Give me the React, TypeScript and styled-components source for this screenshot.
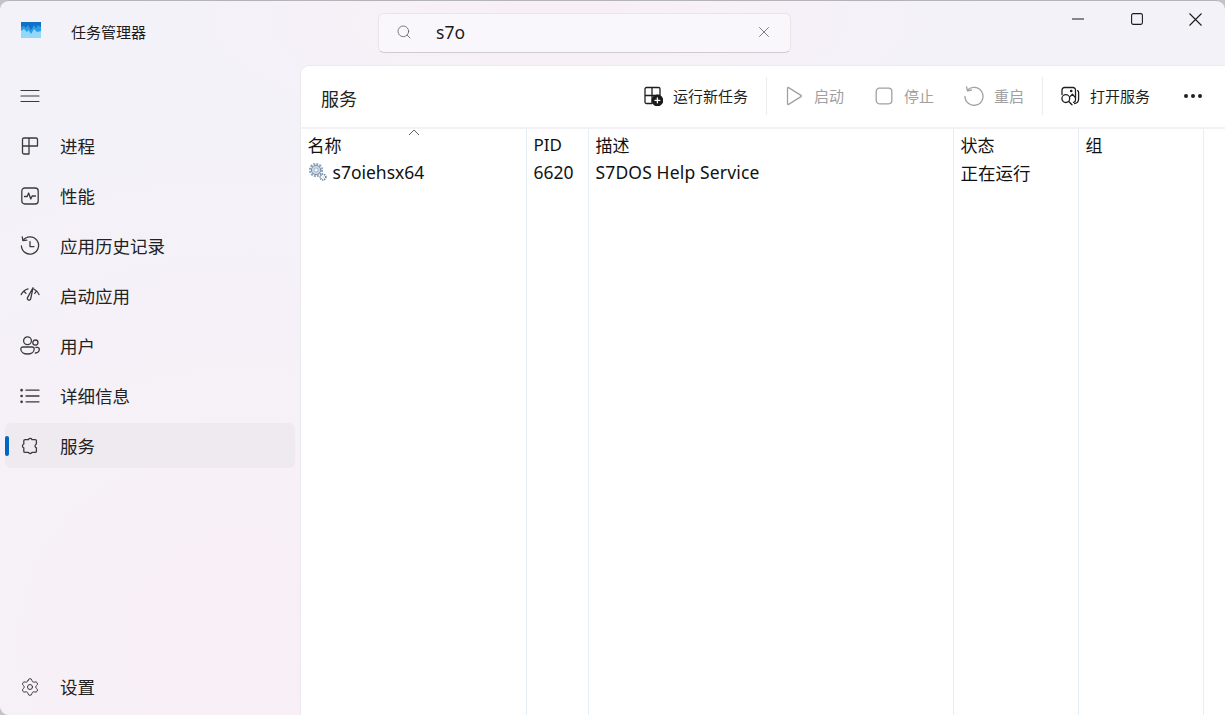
import { FC, ReactNode } from "react";
import styled, { createGlobalStyle } from "styled-components";
import { Ellipsis, Search, Settings, X } from "lucide-react";

const FONT = `"Noto Sans", "Noto Sans CJK SC", sans-serif`;

const Global = createGlobalStyle`
	html, body {
		margin:0;
		padding:0;
		background:#c4c4c8;
	}
	body {
		font-family:${ FONT };
		color:#1b1b1b;
		overflow:hidden;
	}
`;

const Glyph:FC<{ size?:number; sw?:number; children:ReactNode }> = ({ size = 20, sw = 1.3, children }) => (
	<svg
	width={ size }
	height={ size }
	viewBox="0 0 20 20"
	fill="none"
	stroke="currentColor"
	strokeWidth={ sw }
	strokeLinecap="round"
	strokeLinejoin="round"
	>
		{ children }
	</svg>
);

const AppLogo = () => (
	<svg width="20" height="16" viewBox="0 0 20 16">
		<rect width="20" height="16" fill="#1270c4" />
		<path d="M0 5 L3 4 L5 6 L7 3 L10 8 L13 3 L15 6 L17 3 L20 5 V16 H0 Z" fill="#2c9ce6" />
		<path d="M0 9 L3 7 L6 10 L7.5 8 L10 12 L13 7 L16 10 L20 9 V16 H0 Z" fill="#93d7fb" />
	</svg>
);

const icons = {
	menu:<Glyph sw={ 1.2 }><path d="M1 4.5h18M1 10h18M1 15.5h18" /></Glyph>,
	process:(
		<Glyph>
			<path d="M9 10H2.5V3.5a1.5 1.5 0 0 1 1.5-1.5h5zM9 2h7a1.5 1.5 0 0 1 1.5 1.5V10H9zM2.5 10H9v8H4a1.5 1.5 0 0 1-1.5-1.5z" />
		</Glyph>
	),
	perf:(
		<Glyph>
			<rect x="1.8" y="2" width="16.4" height="16" rx="3" />
			<path d="M4.5 10.5h2.7l1.4-3.5 2.2 6 1.4-3h3.3" />
		</Glyph>
	),
	history:(
		<Glyph>
			<path d="M3.2 4.2A8.6 8.6 0 1 1 1.4 10" />
			<path d="M2.2 0.8 3 4.6 6.8 4.2" />
			<path d="M10 5.6v5h4" />
		</Glyph>
	),
	startup:(
		<Glyph>
			<path d="M1.2 8.6A10.5 10.5 0 0 1 8 2.8M3.8 5.2 6 7.4" />
			<path d="M13.8 3A10.5 10.5 0 0 1 19 8.6M16.4 5.2 14.8 7.4" />
			<path d="M13 1.8 10.7 12.8a1.7 1.7 0 0 1-3.3-.9z" />
		</Glyph>
	),
	users:(
		<Glyph>
			<circle cx="7.5" cy="4.8" r="3.9" />
			<circle cx="15.4" cy="6.6" r="2.6" />
			<path d="M2.8 11h9.4a2 2 0 0 1 2 2c0 3-3 5-6.7 5s-6.7-2-6.7-5a2 2 0 0 1 2-2z" />
			<path d="M15.8 11.4h1.6a1.9 1.9 0 0 1 1.9 1.9c0 2-1.6 3.5-4 3.7" />
		</Glyph>
	),
	details:(
		<Glyph>
			<path d="M6 4.2h13M6 10h13M6 15.8h13" />
			<circle cx="1.6" cy="4.2" r=".7" fill="currentColor" />
			<circle cx="1.6" cy="10" r=".7" fill="currentColor" />
			<circle cx="1.6" cy="15.8" r=".7" fill="currentColor" />
		</Glyph>
	),
	services:(
		<Glyph>
			<path d="M5 3.6h3.4a2 2 0 0 1 3.6 0H15.2a1.2 1.2 0 0 1 1.2 1.2V8a2 2 0 0 0 0 3.8v3.4a1.2 1.2 0 0 1-1.2 1.2H12a2 2 0 0 1-3.6 0H5a1.2 1.2 0 0 1-1.2-1.2v-3.4a2 2 0 0 1 0-3.8V4.8A1.2 1.2 0 0 1 5 3.6z" />
		</Glyph>
	),
	run:(
		<Glyph>
			<path d="M9 9.5H2V3a1.5 1.5 0 0 1 1.5-1.5H9zM9 1.5h6.5A1.5 1.5 0 0 1 17 3v6.5H9zM2 9.5h7v8H3.5A1.5 1.5 0 0 1 2 16z" />
			<circle cx="14.4" cy="14.4" r="5.2" fill="#1b1b1b" stroke="#1b1b1b" />
			<path d="M14.4 12v4.8M12 14.4h4.8" stroke="#fff" />
		</Glyph>
	),
	play:<Glyph><path d="M3.5 2.2v15.6a.7.7 0 0 0 1.1.6L17 10.6a.7.7 0 0 0 0-1.2L4.6 1.6a.7.7 0 0 0-1.1.6z" /></Glyph>,
	stop:<Glyph><rect x="2.2" y="2.2" width="15.6" height="15.6" rx="3.2" /></Glyph>,
	restart:(
		<Glyph>
			<path d="M3.6 4A9 9 0 1 1 1 10.5" />
			<path d="M2.6 0.8 3.4 4.8 7.4 4" />
		</Glyph>
	),
	open:(
		<Glyph>
			<path d="M2 8.6V4a2.5 2.5 0 0 1 2.5-2.5H13A2.5 2.5 0 0 1 15.5 4v10a2.5 2.5 0 0 1-2 2.4" />
			<path d="M10 10.6 12.4 8.2l3.1 3.4" />
			<circle cx="11.2" cy="5" r=".7" fill="currentColor" />
			<path d="M17.6 4.6a2.6 2.6 0 0 1 1 2V13a4.6 4.6 0 0 1-4 4.5" />
			<circle cx="5.8" cy="12.6" r="3.9" />
			<path d="M8.7 15.5 12 18.7" />
		</Glyph>
	),
};

const ServiceGear = () => (
	<svg width="20" height="20" viewBox="0 0 20 20">
		<circle cx="8" cy="8" r="5.8" fill="none" stroke="#8fa6bd" strokeWidth="2.6" strokeDasharray="1.9 1.1" />
		<circle cx="8" cy="8" r="4.6" fill="#c9d8e6" stroke="#7f93a8" strokeWidth="1" />
		<circle cx="8" cy="8" r="2" fill="#f2f6fa" stroke="#8fa6bd" strokeWidth=".7" />
		<circle cx="15" cy="15" r="2.8" fill="none" stroke="#6f8296" strokeWidth="1.7" strokeDasharray="1.2 .8" />
		<circle cx="15" cy="15" r="1.1" fill="#dfe7ef" />
	</svg>
);

const Description = styled.span`
	letter-spacing:0.15px;
`;

const NAV = [
	{ icon:icons.process, label:"进程" },
	{ icon:icons.perf, label:"性能" },
	{ icon:icons.history, label:"应用历史记录" },
	{ icon:icons.startup, label:"启动应用" },
	{ icon:icons.users, label:"用户" },
	{ icon:icons.details, label:"详细信息" },
	{ icon:icons.services, label:"服务", active:true },
];

const COLUMNS = [
	{ title:"名称", cell:<><ServiceGear /><span>s7oiehsx64</span></> },
	{ title:"PID", cell:"6620" },
	{ title:"描述", cell:<Description>S7DOS Help Service</Description> },
	{ title:"状态", cell:"正在运行" },
	{ title:"组", cell:"" },
	{ title:"", cell:"", last:true },
];

export default function App(){

	const dnav = NAV.map(n => {
		return (
			<NavRow key={ n.label } $active={ n.active }>
				{ n.active ? <NavMarker /> : null }
				<NavIcon>{ n.icon }</NavIcon>
				<span>{ n.label }</span>
			</NavRow>
		);
	});

	const dcolumns = COLUMNS.map((c, i) => {
		return (
			<Column key={ "c" + i } $last={ c.last }>
				<HeadCell>{ c.title }</HeadCell>
				<RowCell>{ c.cell }</RowCell>
				{ i === 0 ? <SortMark><svg width="12" height="7" viewBox="0 0 12 7" fill="none" stroke="#666" strokeWidth="1"><path d="M1 6 6 1l5 5" /></svg></SortMark> : null }
			</Column>
		);
	});

	return (
		<Window>
			<Global />
			<TitleBar>
				<Brand>
					<LogoSlot><AppLogo /></LogoSlot>
					<AppName>任务管理器</AppName>
				</Brand>
				<SearchBox>
					<Search size={ 16 } strokeWidth={ 1.2 } color="#5c5c5c" />
					<SearchText>s7o</SearchText>
					<X size={ 18 } strokeWidth={ 1 } color="#555" />
				</SearchBox>
				<Controls>
					<ControlBtn>
						<svg width="12" height="12" viewBox="0 0 12 12" stroke="#1b1b1b" strokeWidth="1.1"><path d="M0 6h12" /></svg>
					</ControlBtn>
					<ControlBtn>
						<svg width="12" height="12" viewBox="0 0 12 12" fill="none" stroke="#1b1b1b" strokeWidth="1.1"><rect x=".6" y=".6" width="10.8" height="10.8" rx="1.6" /></svg>
					</ControlBtn>
					<ControlBtn>
						<svg width="13" height="13" viewBox="0 0 13 13" stroke="#1b1b1b" strokeWidth="1.1"><path d="M.5.5l12 12M12.5.5l-12 12" /></svg>
					</ControlBtn>
				</Controls>
			</TitleBar>
			<Body>
				<Sidebar>
					<NavRow>
						<NavIcon>{ icons.menu }</NavIcon>
					</NavRow>
					{ dnav }
					<SidebarFoot>
						<NavRow>
							<NavIcon><Settings size={ 20 } strokeWidth={ 1.2 } /></NavIcon>
							<span>设置</span>
						</NavRow>
					</SidebarFoot>
				</Sidebar>
				<Panel>
					<Toolbar>
						<PanelTitle>服务</PanelTitle>
						<ToolBtn>{ icons.run }<span>运行新任务</span></ToolBtn>
						<ToolSep />
						<ToolBtn $off>{ icons.play }<span>启动</span></ToolBtn>
						<ToolBtn $off>{ icons.stop }<span>停止</span></ToolBtn>
						<ToolBtn $off>{ icons.restart }<span>重启</span></ToolBtn>
						<ToolSep />
						<ToolBtn>{ icons.open }<span>打开服务</span></ToolBtn>
						<MoreBtn><Ellipsis size={ 24 } strokeWidth={ 2 } /></MoreBtn>
					</Toolbar>
					<Table>
						{ dcolumns }
					</Table>
				</Panel>
			</Body>
		</Window>
	);
}

const Window = styled.div`
	width:1225px;
	height:715px;
	box-sizing:border-box;
	display:flex;
	flex-direction:column;
	border-top:1px solid #b4b4b6;
	border-radius:9px 9px 0 9px;
	overflow:hidden;
	background:
		radial-gradient(ellipse 620px 560px at 240px 640px, #f9eff6 0%, #f9eff600 100%),
		radial-gradient(ellipse 420px 130px at 560px 20px, #f9eff6 0%, #f9eff600 100%),
		#f3f2f9;
`;

const TitleBar = styled.div`
	height:64px;
	flex:none;
	display:flex;
	align-items:flex-start;
`;

const Brand = styled.div`
	width:378px;
	flex:none;
	box-sizing:border-box;
	padding:21px 0 0 21px;
	display:flex;
	align-items:center;
	gap:30px;
`;

const LogoSlot = styled.div`
	display:flex;
	margin-bottom:4px;
`;

const AppName = styled.span`
	font-size:15px;
	line-height:20px;
`;

const SearchBox = styled.div`
	width:413px;
	height:40px;
	margin-top:12px;
	flex:none;
	box-sizing:border-box;
	padding:0 17px 2px 17px;
	display:flex;
	align-items:center;
	gap:24px;
	background:#faf7fc;
	border:1px solid #e8e4ea;
	border-bottom-color:#cfcbd2;
	border-radius:6px;
`;

const SearchText = styled.span`
	flex:1;
	font-size:17.5px;
`;

const Controls = styled.div`
	margin-left:auto;
	display:flex;
`;

const ControlBtn = styled.div`
	width:59px;
	height:36px;
	display:flex;
	align-items:center;
	justify-content:center;
`;

const Body = styled.div`
	flex:1;
	min-height:0;
	display:flex;
`;

const Sidebar = styled.div`
	width:300px;
	flex:none;
	box-sizing:border-box;
	padding:8px 5px 6px;
	display:flex;
	flex-direction:column;
	gap:5px;
`;

const SidebarFoot = styled.div`
	margin-top:auto;
`;

const NavRow = styled.div<{ $active?:boolean }>`
	position:relative;
	height:45px;
	flex:none;
	box-sizing:border-box;
	padding-left:15px;
	display:flex;
	align-items:center;
	gap:20px;
	font-size:17.5px;
	color:#222;
	border-radius:6px;
	background:${ p => p.$active ? "#eeeaf0" : "transparent" };
`;

const NavIcon = styled.div`
	width:20px;
	height:20px;
	color:#3a3a3a;
	display:flex;
`;

const NavMarker = styled.div`
	position:absolute;
	left:0;
	top:13px;
	width:4px;
	height:20px;
	border-radius:2px;
	background:#0067c0;
`;

const Panel = styled.div`
	flex:1;
	min-width:0;
	display:flex;
	flex-direction:column;
	background:#fff;
	border-top:1px solid #ebe8ee;
	border-left:1px solid #ebe8ee;
	border-top-left-radius:9px;
`;

const Toolbar = styled.div`
	height:63px;
	flex:none;
	box-sizing:border-box;
	padding:0 7px 2px 0;
	display:flex;
	align-items:center;
	border-bottom:2px solid #f3f1f5;
`;

const PanelTitle = styled.div`
	margin:4px auto 0 20px;
	font-size:18px;
	color:#222;
`;

const ToolBtn = styled.div<{ $off?:boolean }>`
	height:38px;
	padding:0 15px;
	display:flex;
	align-items:center;
	gap:10px;
	font-size:15px;
	color:${ p => p.$off ? "#a0a0a0" : "#1f1f1f" };
`;

const ToolSep = styled.div`
	width:1px;
	height:38px;
	margin:0 2px 0 3px;
	background:#eeecef;
`;

const MoreBtn = styled.div`
	width:50px;
	margin-left:3px;
	display:flex;
	justify-content:center;
	color:#1f1f1f;
`;

const Table = styled.div`
	flex:1;
	min-height:0;
	display:grid;
	grid-template-columns:226px 62px 365px 125px 125px 1fr;
`;

const Column = styled.div<{ $last?:boolean }>`
	position:relative;
	box-sizing:border-box;
	padding-left:6.5px;
	border-right:${ p => p.$last ? "0" : "1px solid #e4eef8" };
`;

const HeadCell = styled.div`
	height:30px;
	display:flex;
	align-items:center;
	font-size:17px;
	color:#111;
`;

const RowCell = styled.div`
	height:26px;
	display:flex;
	align-items:center;
	gap:5px;
	font-size:17.5px;
	color:#111;
	white-space:nowrap;
`;

const SortMark = styled.div`
	position:absolute;
	left:107px;
	top:0;
	display:flex;
`;
